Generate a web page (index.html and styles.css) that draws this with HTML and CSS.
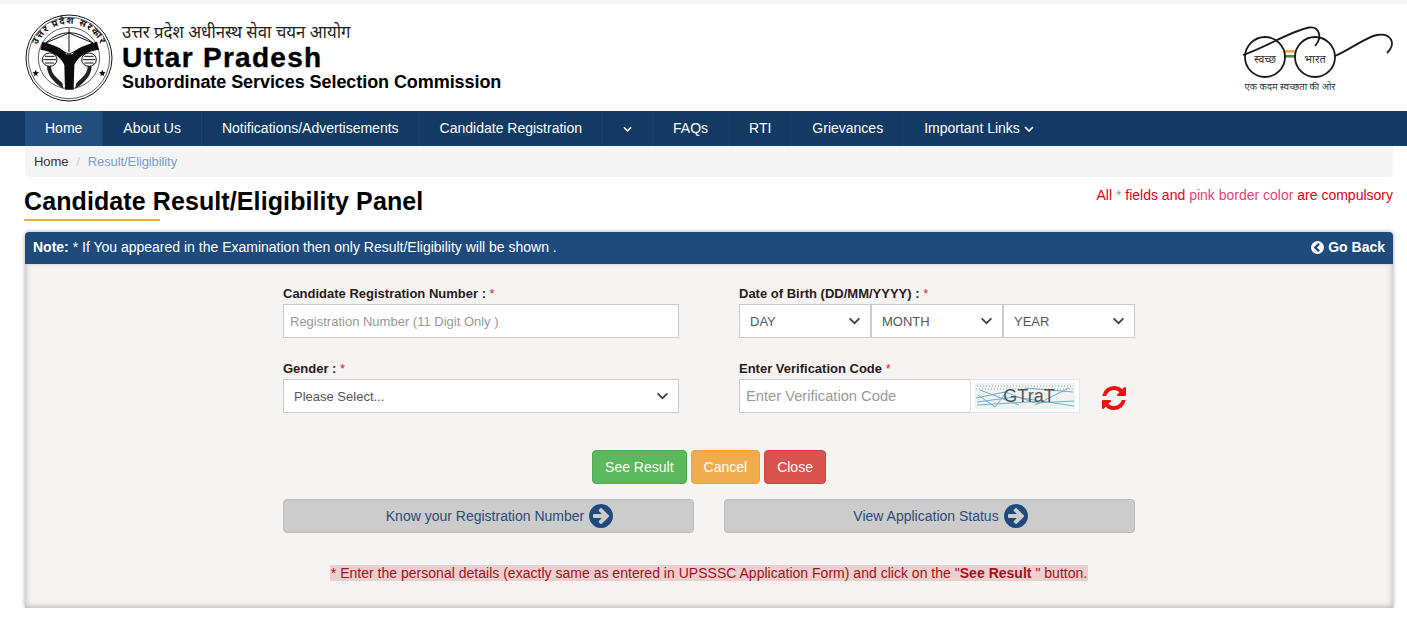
FILE: index.html
```html
<!DOCTYPE html>
<html lang="en">
<head>
  <meta charset="UTF-8">
  <meta name="viewport" content="width=device-width, initial-scale=1.0">
  <title>Candidate Result/Eligibility Panel</title>
  <link rel="stylesheet" href="styles.css">
</head>
<body>
  <div class="top-strip"></div>

  <!-- Header -->
  <header class="site-header">
    <div class="brand">
      <svg class="emblem" viewBox="30 25 264 264" aria-hidden="true">
        <defs>
          <path id="emblem-arc" d="M 76 214 A 103 103 0 1 1 248 214"></path>
        </defs>
        <circle cx="162" cy="157" r="129" fill="none" stroke="#111" stroke-width="3"></circle>
        <circle cx="162" cy="157" r="122" fill="none" stroke="#111" stroke-width="2"></circle>
        <circle cx="162" cy="157" r="92" fill="none" stroke="#111" stroke-width="2"></circle>
        <text class="emblem-text"><textPath href="#emblem-arc" startOffset="50%" text-anchor="middle">उत्तर प्रदेश सरकार</textPath></text>
        <path d="M92 112 Q162 50 234 112 M92 112 L162 145 L234 112 M92 112 L162 82 L234 112 M162 68 V140" fill="none" stroke="#111" stroke-width="3"></path>
        <ellipse cx="104" cy="162" rx="22" ry="20" fill="#fff" stroke="#111" stroke-width="3"></ellipse>
        <ellipse cx="222" cy="162" rx="22" ry="20" fill="#fff" stroke="#111" stroke-width="3"></ellipse>
        <path d="M85 162 H123 M90 152 H118 M90 172 H118 M203 162 H241 M208 152 H236 M208 172 H236" stroke="#111" stroke-width="3"></path>
        <path d="M108 180 C108 205 125 215 142 232 L146 250 L132 240 C112 225 96 205 96 182 Z M218 180 C218 205 201 215 184 232 L180 250 L194 240 C214 225 230 205 230 182 Z" fill="#222"></path>
        <path d="M82 108 C115 118 142 126 154 146 H172 C184 126 212 118 246 108 L252 132 C218 136 190 150 178 178 L176 252 H150 L148 178 C136 150 108 136 76 132 Z" fill="#0c0c0c"></path>
        <path d="M62 192 L65 199 L72 200 L66 205 L68 212 L62 208 L56 212 L58 205 L52 200 L59 199 Z M262 192 L265 199 L272 200 L266 205 L268 212 L262 208 L256 212 L258 205 L252 200 L259 199 Z" fill="#111"></path>
      </svg>
      <div class="brand-text">
        <div class="brand-hindi">उत्तर प्रदेश अधीनस्थ सेवा चयन आयोग</div>
        <div class="brand-state">Uttar Pradesh</div>
        <div class="brand-name">Subordinate Services Selection Commission</div>
      </div>
    </div>
    <svg class="swachh" viewBox="0 0 155 70" aria-hidden="true">
      <rect x="44" y="25" width="11" height="2.6" fill="#eda93a"></rect>
      <rect x="44" y="30" width="11" height="2.6" fill="#3f8f3c"></rect>
      <circle cx="24" cy="32" r="20" fill="none" stroke="#1a1a1a" stroke-width="1.8"></circle>
      <circle cx="74" cy="32" r="20" fill="none" stroke="#1a1a1a" stroke-width="1.8"></circle>
      <path d="M2 30 C25 22 50 6 68 2.5 C78 1 82 12 74 21" fill="none" stroke="#1a1a1a" stroke-width="1.8"></path>
      <path d="M94 31 C110 24 125 12 136 10 C150 8 156 18 146 28" fill="none" stroke="#1a1a1a" stroke-width="1.8"></path>
      <text class="swachh-word" x="24" y="38" text-anchor="middle">स्वच्छ</text>
      <text class="swachh-word" x="74" y="38" text-anchor="middle">भारत</text>
      <text class="swachh-line" x="49" y="65" text-anchor="middle">एक कदम स्वच्छता की ओर</text>
    </svg>
  </header>

  <!-- Navigation -->
  <nav class="main-nav">
    <a class="nav-item active">Home</a>
    <a class="nav-item">About Us</a>
    <a class="nav-item">Notifications/Advertisements</a>
    <a class="nav-item">Candidate Registration</a>
    <a class="nav-item nav-caret">
      <svg class="chev" viewBox="0 0 10 6"><path d="M1 1l4 4 4-4" fill="none" stroke="#fff" stroke-width="1.7"></path></svg>
    </a>
    <a class="nav-item">FAQs</a>
    <a class="nav-item">RTI</a>
    <a class="nav-item">Grievances</a>
    <a class="nav-item nav-last">Important Links
      <svg class="chev" viewBox="0 0 10 6"><path d="M1 1l4 4 4-4" fill="none" stroke="#fff" stroke-width="1.7"></path></svg>
    </a>
  </nav>

  <main class="page">
    <div class="breadcrumb">
      <span class="crumb">Home</span>
      <span class="crumb-sep">/</span>
      <span class="crumb-current">Result/Eligibility</span>
    </div>

    <div class="title-row">
      <h1 class="page-title">Candidate Result/Eligibility Panel</h1>
      <p class="compulsory">All <span class="star-grey">*</span> fields and <span class="pink">pink border color</span> are compulsory</p>
    </div>

    <section class="panel">
      <div class="panel-head">
        <span><b>Note:</b> * If You appeared in the Examination then only Result/Eligibility will be shown .</span>
        <a class="go-back">
          <svg class="go-back-icon" viewBox="0 0 1792 1792"><path fill="#fff" d="M1037 1395l102-102q19-19 19-45t-19-45l-307-307 307-307q19-19 19-45t-19-45l-102-102q-19-19-45-19t-45 19l-454 454q-19 19-19 45t19 45l454 454q19 19 45 19t45-19zm627-499q0 209-103 385.5t-279.5 279.5-385.5 103-385.5-103-279.5-279.5-103-385.5 103-385.5 279.5-279.5 385.5-103 385.5 103 279.5 279.5 103 385.5z"></path></svg>
          Go Back
        </a>
      </div>

      <div class="panel-body">
        <div class="form-grid">
          <div class="field">
            <label class="field-label">Candidate Registration Number : <span class="req">*</span></label>
            <input class="control" type="text" placeholder="Registration Number (11 Digit Only )">
          </div>
          <div class="field">
            <label class="field-label">Date of Birth (DD/MM/YYYY) : <span class="req">*</span></label>
            <div class="dob">
              <select class="control select"><option>DAY</option></select>
              <select class="control select"><option>MONTH</option></select>
              <select class="control select"><option>YEAR</option></select>
            </div>
          </div>
          <div class="field">
            <label class="field-label">Gender : <span class="req">*</span></label>
            <select class="control select"><option>Please Select...</option></select>
          </div>
          <div class="field">
            <label class="field-label">Enter Verification Code <span class="req">*</span></label>
            <div class="captcha-row">
              <input class="control code-input" type="text" placeholder="Enter Verification Code">
              <div class="captcha">
                <svg viewBox="0 0 100 26" width="100" height="26" aria-hidden="true">
                  <rect width="100" height="26" fill="#f0f2f2"></rect>
                  <path d="M2 3 H98 M1 6 H99" fill="none" stroke="#c3d3d8" stroke-width="2" stroke-dasharray="1 2"></path>
                  <path d="M1 15 L30 9 L60 20 L99 18 M2 19 L40 14 L99 23 M3 12 L20 24 L34 6 M5 7 L44 22 M50 5 L98 9 M60 22 L94 5 M2 22 L70 18" fill="none" stroke="#6fb0c8" stroke-width="1"></path>
                  <text class="captcha-text" x="54" y="19" text-anchor="middle">GTraT</text>
                </svg>
              </div>
              <svg class="refresh" viewBox="0 0 1792 1792" aria-hidden="true"><path fill="#ee1111" d="M1639 1056q0 5-1 7-64 268-268 434.5t-478 166.5q-146 0-282.5-55t-243.5-157l-129 129q-19 19-45 19t-45-19-19-45v-448q0-26 19-45t45-19h448q26 0 45 19t19 45-19 45l-137 137q71 66 161 102t187 36q134 0 250-65t186-179q11-17 53-117 8-23 30-23h192q13 0 22.5 9.5t9.5 22.5zm25-800v448q0 26-19 45t-45 19h-448q-26 0-45-19t-19-45 19-45l138-138q-148-137-349-137-134 0-250 65t-186 179q-11 17-53 117-8 23-30 23h-199q-13 0-22.5-9.5t-9.5-22.5v-7q65-268 270-434.5t480-166.5q146 0 284 55.5t245 156.5l130-129q19-19 45-19t45 19 19 45z"></path></svg>
            </div>
          </div>
        </div>

        <div class="actions">
          <button class="btn btn-green">See Result</button>
          <button class="btn btn-orange">Cancel</button>
          <button class="btn btn-red">Close</button>
        </div>

        <div class="link-row">
          <a class="link-btn">Know your Registration Number
            <svg class="arrow" viewBox="0 0 1792 1792"><path fill="#1f4a7c" d="M1413 896q0-27-18-45l-91-91-362-362q-18-18-45-18t-45 18l-91 91q-18 18-18 45t18 45l189 189h-502q-26 0-45 19t-19 45v128q0 26 19 45t45 19h502l-189 189q-19 19-19 45t19 45l91 91q18 18 45 18t45-18l362-362 91-91q18-18 18-45zm251 0q0 209-103 385.5t-279.5 279.5-385.5 103-385.5-103-279.5-279.5-103-385.5 103-385.5 279.5-279.5 385.5-103 385.5 103 279.5 279.5 103 385.5z"></path></svg>
          </a>
          <a class="link-btn">View Application Status
            <svg class="arrow" viewBox="0 0 1792 1792"><path fill="#1f4a7c" d="M1413 896q0-27-18-45l-91-91-362-362q-18-18-45-18t-45 18l-91 91q-18 18-18 45t18 45l189 189h-502q-26 0-45 19t-19 45v128q0 26 19 45t45 19h502l-189 189q-19 19-19 45t19 45l91 91q18 18 45 18t45-18l362-362 91-91q18-18 18-45zm251 0q0 209-103 385.5t-279.5 279.5-385.5 103-385.5-103-279.5-279.5-103-385.5 103-385.5 279.5-279.5 385.5-103 385.5 103 279.5 279.5 103 385.5z"></path></svg>
          </a>
        </div>

        <p class="hint"><span>* Enter the personal details (exactly same as entered in UPSSSC Application Form) and click on the "<b>See Result</b> " button.</span></p>
      </div>
    </section>
  </main>
</body>
</html>
```

FILE: styles.css
```css
* {
  box-sizing: border-box;
}

body {
  font-family: "Liberation Sans", Arial, sans-serif;
  font-size: 14px;
  margin: 0;
  background: #fff;
  color: #333;
}

.top-strip {
  height: 4px;
  background: #f5f5f5;
}

/* Header */
.site-header {
  height: 107px;
  display: flex;
  justify-content: space-between;
  align-items: flex-start;
  padding: 10px 11px 0 25px;
}

.brand {
  display: flex;
  gap: 9px;
}

.emblem {
  width: 88px;
  height: 88px;
}

.emblem-text {
  font-family: "Noto Sans", "DejaVu Sans", sans-serif;
  font-size: 28px;
  font-weight: 700;
  letter-spacing: 4px;
  fill: #111;
}

.brand-text {
  color: #000;
  padding-top: 8px;
}

.brand-hindi {
  font-family: "Noto Sans", "DejaVu Sans", sans-serif;
  font-size: 16.8px;
  line-height: 20px;
  color: #222;
}

.brand-state {
  font-size: 28px;
  line-height: 32px;
  font-weight: 700;
  letter-spacing: 1.3px;
  -webkit-text-stroke: 0.4px #000;
}

.brand-name {
  font-size: 18px;
  line-height: 17px;
  font-weight: 700;
  letter-spacing: -0.07px;
}

.swachh {
  width: 155px;
  height: 70px;
  margin-top: 11px;
}

.swachh-word {
  font-family: "Noto Sans", "DejaVu Sans", sans-serif;
  font-size: 11px;
  fill: #333;
}

.swachh-line {
  font-family: "Noto Sans", "DejaVu Sans", sans-serif;
  font-size: 9.5px;
  fill: #333;
}

/* Navigation */
.main-nav {
  height: 35px;
  display: flex;
  padding-left: 25px;
  background: #133a63;
}

.nav-item {
  display: flex;
  align-items: center;
  gap: 4px;
  padding: 0 20px 2px;
  color: #fff;
  border-right: 1px solid #1a426d;
}

.nav-item.active {
  background: #234d7f;
}

.nav-caret {
  width: 50px;
  justify-content: center;
}

.nav-last {
  border-right: 0;
}

.chev {
  width: 10px;
  height: 6px;
  margin-top: 2px;
}

/* Page */
.page {
  padding: 0 14px 0 25px;
}

.breadcrumb {
  height: 31px;
  display: flex;
  align-items: center;
  padding: 0 9px;
  background: #f5f5f5;
  border-radius: 0 0 4px 4px;
  font-size: 13px;
  letter-spacing: -0.1px;
}

.crumb-sep {
  color: #ccc;
  margin: 0 8px;
}

.crumb-current {
  color: #7a9bd3;
}

.title-row {
  display: flex;
  justify-content: space-between;
  align-items: flex-start;
  height: 55px;
}

.page-title {
  margin: 10px 0 0 -1px;
  font-size: 25px;
  line-height: 29px;
  color: #000;
  letter-spacing: 0.1px;
}

.page-title::after {
  content: "";
  display: block;
  width: 136px;
  height: 2px;
  margin-top: 3px;
  background: #e3ae3c;
}

.compulsory {
  margin: 10px 0 0;
  line-height: 17px;
  color: #e3001b;
}

.star-grey {
  color: #999;
}

.pink {
  color: #e0457b;
}

/* Panel */
.panel {
  box-shadow: 0 0 4px rgba(0, 0, 0, 0.35);
  border-radius: 4px 4px 0 0;
}

.panel-head {
  height: 32px;
  display: flex;
  justify-content: space-between;
  align-items: center;
  padding: 0 8px 2px;
  background: #1f4a7c;
  color: #fff;
  border-radius: 4px 4px 0 0;
}

.go-back {
  display: flex;
  align-items: center;
  gap: 3px;
  font-weight: 700;
}

.go-back-icon {
  width: 15px;
  height: 15px;
}

.panel-body {
  height: 344px;
  padding: 22px 258px 0;
  background: #f6f4f3;
  box-shadow: inset 0 -3px 5px rgba(0, 0, 0, 0.12), inset 3px 0 4px rgba(0, 0, 0, 0.08), inset -3px 0 4px rgba(0, 0, 0, 0.08);
}

.form-grid {
  display: grid;
  grid-template-columns: 396px 396px;
  column-gap: 60px;
  row-gap: 23px;
}

.field-label {
  display: block;
  height: 18px;
  font-size: 13px;
  line-height: 16px;
  font-weight: 700;
  color: #2a1a1a;
}

.req {
  color: #d9262c;
  font-weight: 400;
}

.control {
  display: block;
  width: 100%;
  height: 34px;
  padding: 0 6px;
  border: 1px solid #ccc;
  background: #fff;
  font-family: inherit;
  font-size: 13px;
  color: #555;
  border-radius: 0;
}

.control::placeholder {
  color: #999;
  opacity: 1;
}

.select {
  appearance: none;
  padding: 0 30px 0 10px;
  background-image: url("data:image/svg+xml,%3Csvg xmlns='http://www.w3.org/2000/svg' viewBox='0 0 14 9'%3E%3Cpath d='M1.5 1.5L7 7l5.5-5.5' fill='none' stroke='%23444' stroke-width='2'/%3E%3C/svg%3E");
  background-repeat: no-repeat;
  background-position: right 9px center;
  background-size: 13px 8px;
}

.dob {
  display: grid;
  grid-template-columns: repeat(3, 1fr);
}

.captcha-row {
  display: flex;
  align-items: center;
}

.code-input {
  width: 232px;
  font-size: 14.7px;
}

.captcha {
  width: 110px;
  height: 34px;
  display: flex;
  align-items: center;
  justify-content: center;
  background: #fff;
  border: 1px solid #e4e4e4;
  margin-left: -1px;
}

.captcha-text {
  font-family: "Liberation Sans", Arial, sans-serif;
  font-size: 18px;
  fill: #555;
}

.refresh {
  width: 28px;
  height: 28px;
  margin: 3px 0 0 20px;
}

/* Buttons */
.actions {
  display: flex;
  justify-content: center;
  gap: 4px;
  margin-top: 37px;
}

.btn {
  height: 34px;
  padding: 0 12px;
  border: 1px solid transparent;
  border-radius: 4px;
  color: #fff;
  font-family: inherit;
  font-size: 14px;
}

.btn-green {
  background: #5cb85c;
  border-color: #4cae4c;
}

.btn-orange {
  background: #f0ad4e;
  border-color: #eea236;
}

.btn-red {
  background: #d9534f;
  border-color: #d43f3a;
}

.link-row {
  display: grid;
  grid-template-columns: 411px 411px;
  column-gap: 30px;
  margin-top: 15px;
}

.link-btn {
  height: 34px;
  display: flex;
  align-items: center;
  justify-content: center;
  gap: 3px;
  padding-left: 24px;
  background: #ccc;
  border: 1px solid #bbb;
  border-radius: 4px;
  color: #2c4a78;
}

.arrow {
  width: 28px;
  height: 28px;
}

.hint {
  margin: 32px 0 0;
  text-align: center;
  line-height: 16px;
  color: #a5111b;
}

.hint span {
  background: #ecd0d0;
  padding: 0 1px;
  letter-spacing: 0.015px;
}
```
